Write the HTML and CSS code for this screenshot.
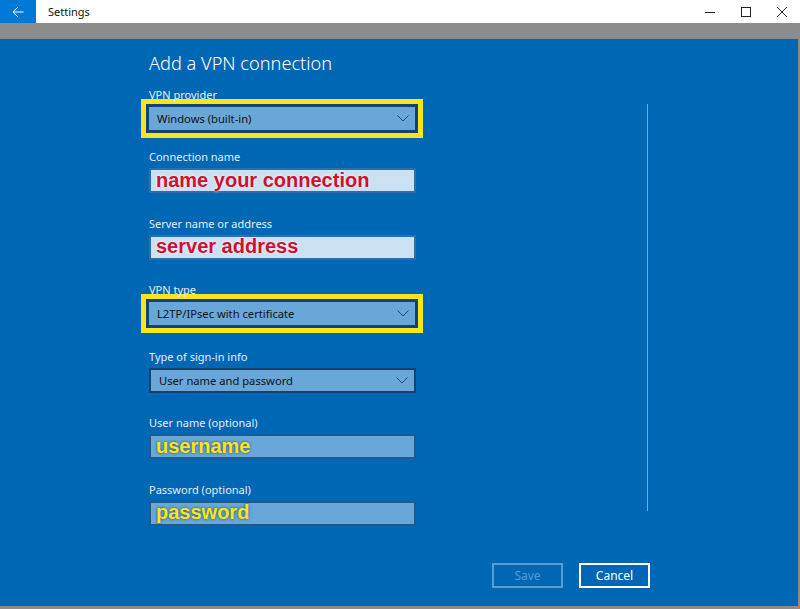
FILE: index.html
```html
<!DOCTYPE html>
<html>
<head>
    <title>Settings</title>
    <link rel="stylesheet" href="styles.css">
</head>
<body>
    <div class="titlebar">
        <div class="back-button">
            <svg width="12" height="12" viewBox="0 0 12 12"><path d="M11.5 6H1M6 1L1 6l5 5" fill="none" stroke="#fff" stroke-width="1"/></svg>
        </div>
        <span class="app-title">Settings</span>
        <div class="window-controls">
            <span class="control"><svg width="10" height="10" viewBox="0 0 10 10"><path d="M0 5.5h10" stroke="#222" stroke-width="1"/></svg></span>
            <span class="control"><svg width="10" height="10" viewBox="0 0 10 10"><rect x="0.5" y="0.5" width="9" height="9" fill="none" stroke="#222" stroke-width="1"/></svg></span>
            <span class="control"><svg width="10" height="10" viewBox="0 0 10 10"><path d="M0 0l10 10M10 0L0 10" stroke="#222" stroke-width="1"/></svg></span>
        </div>
    </div>
    <div class="band"></div>
    <div class="window">
        <div class="main">
            <div class="form">
                <h1>Add a VPN connection</h1>

                <div class="field first">
                    <label>VPN provider</label>
                    <div class="highlight">
                        <div class="dropdown">
                            <span>Windows (built-in)</span>
                            <svg class="chevron" width="12" height="7" viewBox="0 0 12 7"><path d="M0.5 0.5L6 6l5.5-5.5" fill="none" stroke="#2c4a66" stroke-width="1"/></svg>
                        </div>
                    </div>
                </div>

                <div class="field">
                    <label>Connection name</label>
                    <div class="textbox pale"><span class="note red">name your connection</span></div>
                </div>

                <div class="field">
                    <label>Server name or address</label>
                    <div class="textbox pale"><span class="note red">server address</span></div>
                </div>

                <div class="field">
                    <label>VPN type</label>
                    <div class="highlight">
                        <div class="dropdown">
                            <span>L2TP/IPsec with certificate</span>
                            <svg class="chevron" width="12" height="7" viewBox="0 0 12 7"><path d="M0.5 0.5L6 6l5.5-5.5" fill="none" stroke="#2c4a66" stroke-width="1"/></svg>
                        </div>
                    </div>
                </div>

                <div class="field">
                    <label>Type of sign-in info</label>
                    <div class="dropdown">
                        <span>User name and password</span>
                        <svg class="chevron" width="12" height="7" viewBox="0 0 12 7"><path d="M0.5 0.5L6 6l5.5-5.5" fill="none" stroke="#2c4a66" stroke-width="1"/></svg>
                    </div>
                </div>

                <div class="field">
                    <label>User name (optional)</label>
                    <div class="textbox"><span class="note yellow">username</span></div>
                </div>

                <div class="field">
                    <label>Password (optional)</label>
                    <div class="textbox"><span class="note yellow">password</span></div>
                </div>
            </div>
            <div class="scrollbar"></div>
        </div>
        <div class="actions">
            <button class="btn disabled">Save</button>
            <button class="btn">Cancel</button>
        </div>
    </div>
</body>
</html>
```

FILE: styles.css
```css
:root {
    --blue: #0067b4;
    --label: #e4eef7;
    --field-bg: #68a7d7;
    --field-pale: #cbe1f2;
    --field-border: #14436f;
    --yellow: #f7e51e;
    --red: #cf1030;
}

body {
    margin: 0;
    width: 800px;
    height: 609px;
    overflow: hidden;
    background: #8c8c8c;
    font-family: 'Noto Sans', 'Open Sans', sans-serif;
    display: flex;
    flex-direction: column;
}

.titlebar {
    height: 23px;
    background: #fff;
    display: flex;
    align-items: center;
    flex-shrink: 0;
}

.back-button {
    width: 36px;
    height: 23px;
    background: #0078d7;
    display: flex;
    align-items: center;
    justify-content: center;
}

.app-title {
    margin-left: 12px;
    font-size: 11px;
    color: #111;
}

.window-controls {
    margin-left: auto;
    display: flex;
}

.control {
    width: 36px;
    height: 23px;
    display: flex;
    align-items: center;
    justify-content: center;
}

.band {
    height: 16px;
    flex-shrink: 0;
}

.window {
    height: 567px;
    margin-right: 2px;
    background: var(--blue);
    display: flex;
    flex-direction: column;
}

.main {
    display: flex;
}

.form {
    margin-left: 149px;
    width: 267px;
}

h1 {
    margin: 10px 0 10px;
    font-size: 18.2px;
    line-height: 28px;
    font-weight: 300;
    color: #fff;
}

.field {
    margin-bottom: 22.5px;
}

.field.first {
    margin-bottom: 18px;
}

label {
    display: block;
    font-size: 11px;
    line-height: 16px;
    color: var(--label);
    margin-bottom: 3px;
}

/* yellow box drawn over the screenshot, kept out of the flow */
.highlight {
    margin: -7px -7px -7px -8px;
    border: 5px solid var(--yellow);
    padding: 1px;
    background: var(--field-border);
}

.dropdown,
.textbox {
    height: 25px;
    box-sizing: border-box;
    border: 2px solid var(--field-border);
    background: var(--field-bg);
    display: flex;
    align-items: center;
}

.dropdown {
    padding: 0 6px 0 8px;
    font-size: 11.2px;
    color: #111;
}

.highlight .dropdown {
    height: 27px;
}

.chevron {
    margin-left: auto;
}

.textbox {
    padding-left: 5px;
    border-color: #1f5a8c;
}

.textbox.pale {
    background: var(--field-pale);
    border-color: #2f6fa3;
}

.note {
    font-family: 'Liberation Sans', Arial, sans-serif;
    font-weight: 700;
    font-size: 20px;
    line-height: 20px;
    margin-top: -2px;
}

.note.red {
    color: var(--red);
    text-shadow: 0 0 3px rgba(255, 255, 255, 0.9);
}

.note.yellow {
    color: var(--yellow);
    text-shadow: 0 0 3px rgba(40, 60, 90, 0.9);
}

.scrollbar {
    margin: 65px 150px 0 auto;
    width: 1px;
    height: 407px;
    background: #8fa5b9;
}

.actions {
    margin-top: auto;
    padding: 0 148px 18px 0;
    display: flex;
    justify-content: flex-end;
    gap: 16px;
}

.btn {
    width: 71px;
    height: 25px;
    border: 2px solid #fff;
    background: transparent;
    color: #fff;
    font-family: 'Noto Sans', 'Open Sans', sans-serif;
    font-size: 12px;
    padding: 0;
}

.btn.disabled {
    border-color: rgba(255, 255, 255, 0.35);
    color: rgba(255, 255, 255, 0.35);
}
```
